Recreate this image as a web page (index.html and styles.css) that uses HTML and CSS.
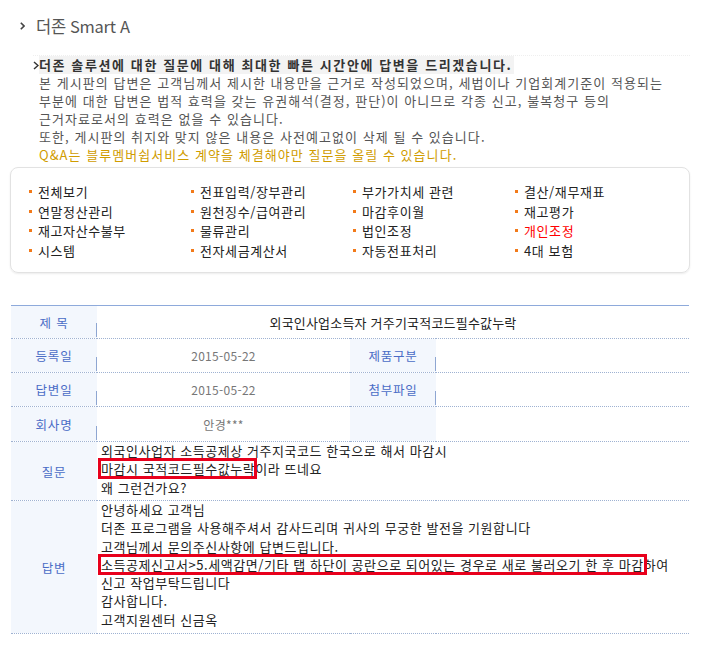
FILE: index.html
```html
<!DOCTYPE html>
<html lang="ko">
<head>
<meta charset="utf-8">
<title>더존 Smart A</title>
<link rel="stylesheet" href="styles.css">
</head>
<body>
<div class="page">
  <h1 class="title">
    <svg class="chev" width="5" height="8" viewBox="0 0 5 8"><path d="M0.8 0.8 L4 4 L0.8 7.2" fill="none" stroke="#444" stroke-width="1.6"/></svg>
    <span>더존 Smart A</span>
  </h1>
  <div class="rule"></div>
  <div class="intro">
    <p class="lead"><svg class="chev-s" width="6" height="9" viewBox="0 0 6 9"><path d="M1 1 L5 4.5 L1 8" fill="none" stroke="#333" stroke-width="1.5"/></svg><b>더존 솔루션에 대한 질문에 대해 최대한 빠른 시간안에 답변을 드리겠습니다.</b></p>
    <p>본 게시판의 답변은 고객님께서 제시한 내용만을 근거로 작성되었으며, 세법이나 기업회계기준이 적용되는</p>
    <p>부분에 대한 답변은 법적 효력을 갖는 유권해석(결정, 판단)이 아니므로 각종 신고, 불복청구 등의</p>
    <p>근거자료로서의 효력은 없을 수 있습니다.</p>
    <p>또한, 게시판의 취지와 맞지 않은 내용은 사전예고없이 삭제 될 수 있습니다.</p>
    <p class="gold">Q&amp;A는 블루멤버쉽서비스 계약을 체결해야만 질문을 올릴 수 있습니다.</p>
  </div>

  <div class="cats">
    <ul class="cat-grid">
      <li>전체보기</li>
      <li>전표입력/장부관리</li>
      <li>부가가치세 관련</li>
      <li>결산/재무재표</li>
      <li>연말정산관리</li>
      <li>원천징수/급여관리</li>
      <li>마감후이월</li>
      <li>재고평가</li>
      <li>재고자산수불부</li>
      <li>물류관리</li>
      <li>법인조정</li>
      <li class="on">개인조정</li>
      <li>시스템</li>
      <li>전자세금계산서</li>
      <li>자동전표처리</li>
      <li>4대 보험</li>
    </ul>
  </div>

  <table class="qa">
    <colgroup>
      <col class="c-label"><col class="c-val"><col class="c-label"><col class="c-val">
    </colgroup>
    <tr class="r1">
      <th class="sep">제 목</th>
      <td colspan="3" class="center dark">외국인사업소득자 거주기국적코드필수값누락</td>
    </tr>
    <tr class="r2">
      <th class="sep">등록일</th>
      <td class="center gray">2015-05-22</td>
      <th class="sep">제품구분</th>
      <td></td>
    </tr>
    <tr class="r3">
      <th class="sep">답변일</th>
      <td class="center gray">2015-05-22</td>
      <th class="sep">첨부파일</th>
      <td></td>
    </tr>
    <tr class="r4">
      <th class="sep">회사명</th>
      <td class="center gray">안경***</td>
      <th></th>
      <td></td>
    </tr>
    <tr class="r5">
      <th>질문</th>
      <td colspan="3" class="body">외국인사업자 소득공제상 거주지국코드 한국으로 해서 마감시<br><span class="mark m1">마감시 국적코드필수값누락</span>이라 뜨네요<br>왜 그런건가요?</td>
    </tr>
    <tr class="r6">
      <th>답변</th>
      <td colspan="3" class="body">안녕하세요 고객님<br>더존 프로그램을 사용해주셔서 감사드리며 귀사의 무궁한 발전을 기원합니다<br>고객님께서 문의주신사항에 답변드립니다.<br><span class="mark m2">소득공제신고서&gt;5.세액감면/기타 탭 하단이 공란으로 되어있는 경우로 새로 불러오기 한 후 마감</span>하여<br>신고 작업부탁드립니다<br>감사합니다.<br>고객지원센터 신금옥</td>
    </tr>
  </table>
</div>
</body>
</html>
```

FILE: styles.css
```css
html, body {
  margin: 0;
  padding: 0;
  background: #fff;
}

body {
  width: 710px;
  font-family: "Noto Sans CJK KR", "Noto Sans", sans-serif;
  color: #222;
}

.page {
  width: 710px;
}

.title {
  margin: 0;
  height: 52px;
  padding-left: 20px;
  display: flex;
  align-items: center;
  gap: 11px;
  font-size: 16.5px;
  font-weight: normal;
  color: #555;
  letter-spacing: -0.3px;
}

.chev {
  display: block;
}

.rule {
  margin: 3px 20px 0 33px;
  border-top: 1px dotted #efefef;
}

.intro {
  padding-left: 33px;
  font-size: 13px;
  line-height: 18px;
  color: #555;
  letter-spacing: 1.05px;
}

.intro p {
  margin: 0;
  padding-left: 6px;
  white-space: nowrap;
}

.intro .lead {
  padding-left: 0;
  display: flex;
  align-items: center;
}

.chev-s {
  display: block;
}

.lead b {
  background: #f3f3f3;
  color: #333;
  letter-spacing: 1.6px;
  padding-right: 2px;
}

.intro .gold {
  color: #d09c00;
}

.cats {
  margin: 3px 20px 0 10px;
  height: 106px;
  box-sizing: border-box;
  border: 1px solid #e2e2e2;
  border-radius: 8px;
  box-shadow: 0 1px 2px rgba(0, 0, 0, 0.08);
  padding: 14px 0 0 18px;
}

.cat-grid {
  list-style: none;
  margin: 0;
  padding: 0;
  display: grid;
  grid-template-columns: repeat(4, 162px);
  grid-auto-rows: 19.6px;
}

.cat-grid li {
  display: flex;
  align-items: center;
  font-size: 13px;
  color: #222;
  white-space: nowrap;
  letter-spacing: 0.6px;
}

.cat-grid li::before {
  content: "";
  width: 3px;
  height: 3px;
  background: #f27a1a;
  margin-right: 6px;
  flex: none;
}

.cat-grid li.on {
  color: #ff0000;
}

.qa {
  margin: 32px 0 0 11px;
  width: 678px;
  border-collapse: collapse;
  table-layout: fixed;
  border-top: 1px solid #8eaadb;
  font-size: 13px;
}

.c-label {
  width: 86px;
}

.c-val {
  width: 253px;
}

.qa th,
.qa td {
  padding: 0;
  border-bottom: 1px dotted #9fb2d2;
  vertical-align: middle;
}

.qa th {
  background: #f3f7fd;
  color: #4a6cc6;
  font-weight: normal;
  font-size: 12.5px;
  letter-spacing: 0.8px;
  text-align: center;
  position: relative;
}

.qa th.sep::after {
  content: "";
  position: absolute;
  right: 0;
  bottom: 1px;
  width: 1px;
  height: 14px;
  background: #8ea6d2;
}

.qa .center {
  text-align: center;
}

.qa .dark {
  color: #222;
  letter-spacing: 0.2px;
}

.qa .gray {
  color: #777;
  font-size: 12px;
  letter-spacing: 0.3px;
}

.r1 th, .r1 td { height: 32px; }
.r2 th, .r2 td { height: 33px; }
.r3 th, .r3 td { height: 33px; }
.r4 th, .r4 td { height: 34px; }
.r5 th, .r5 td { height: 58px; }
.r6 th, .r6 td { height: 132px; }

.qa td.body {
  padding: 0 0 0 4px;
  vertical-align: top;
  line-height: 18.3px;
  color: #222;
  white-space: nowrap;
  letter-spacing: 0.55px;
}

.mark {
  position: relative;
}

.mark::after {
  content: "";
  position: absolute;
  top: -1px;
  bottom: -1px;
  left: -3px;
  right: -2px;
  border: 3.5px solid #e8001c;
  pointer-events: none;
}

.m2::after {
  right: -3px;
}
```
